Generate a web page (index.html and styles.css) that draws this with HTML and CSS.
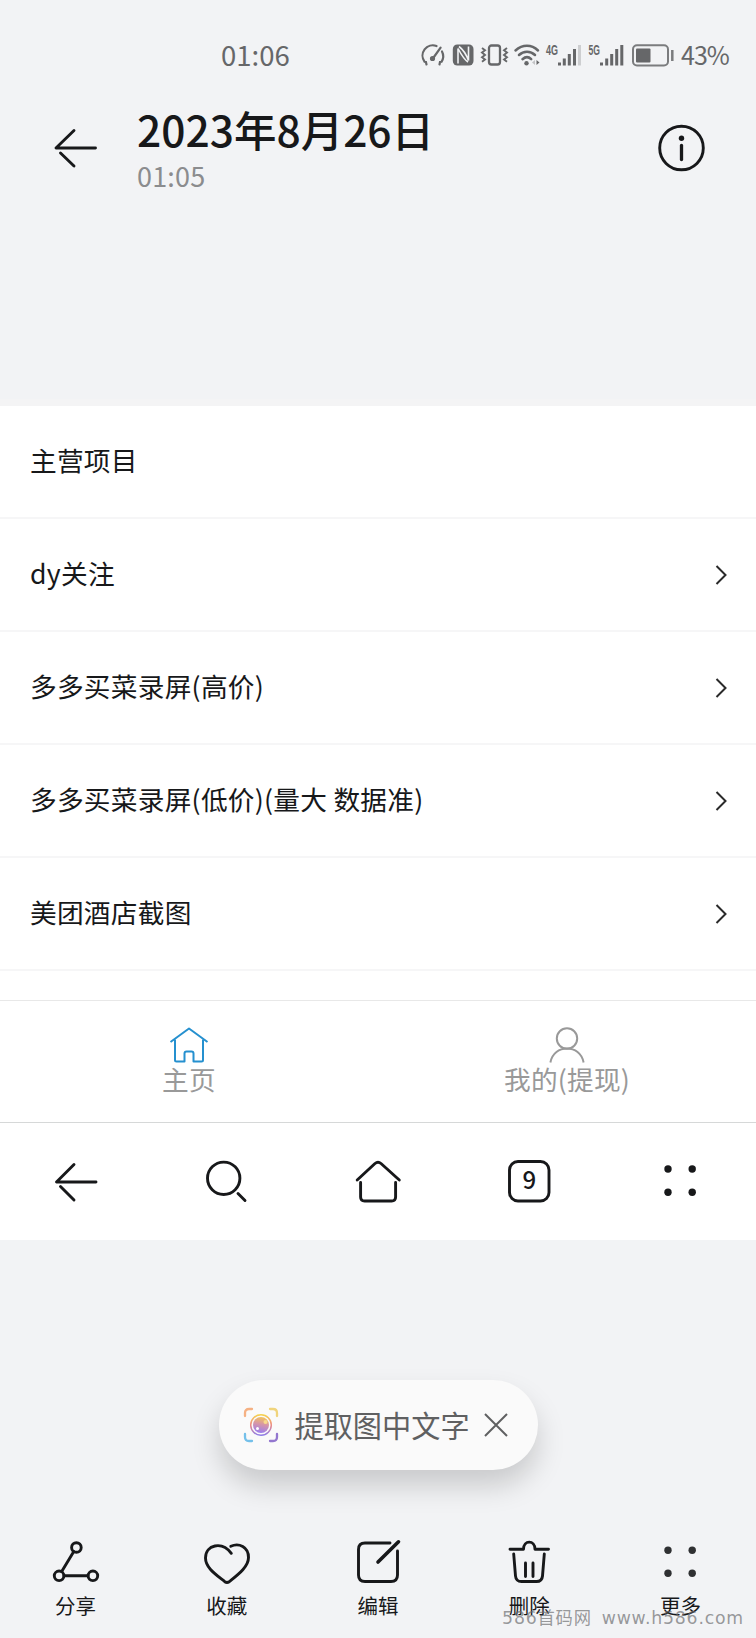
FILE: index.html
```
<!DOCTYPE html>
<html lang="zh-CN">
<head>
    <meta charset="UTF-8">
    <meta name="viewport" content="width=device-width, initial-scale=1.0">
    <title>2023年8月26日</title>
    <link rel="stylesheet" href="styles.css">
</head>
<body>
    <div class="status-bar">
        <span class="clock">01:06</span>
        <div class="status-icons">
            <svg width="24" height="24" viewBox="0 0 24 24" fill="none" stroke="#666769" stroke-width="2.2" stroke-linecap="round">
                <path d="M5.500 21.500l-.6-2.500-1.300-.2A10.300 10.300 0 0 1 15.500 3"/>
                <path d="M21 8.500A10.300 10.300 0 0 1 20.500 18.800l-1.500.2-.5 2.500"/>
                <path d="M19.600 4.600L11.500 16"/>
                <circle cx="11.500" cy="15.500" r="1.500" fill="#666769"/>
            </svg>
            <svg width="22" height="24" viewBox="0 0 22 24">
                <rect x="0.800" y="1.500" width="20.700" height="21" rx="4.500" fill="#666769"/>
                <path d="M6 20.500V5.500Q11.500 16 16 19M7 3.500Q13 8 16.500 17.500V3.500" fill="none" stroke="#f2f3f5" stroke-width="1.600"/>
            </svg>
            <svg width="27" height="24" viewBox="0 0 27 24" fill="none" stroke="#666769">
                <rect x="8" y="2.500" width="11" height="19" rx="2.500" stroke-width="2.300"/>
                <path d="M1 5l3 2.300-3 2.300 3 2.300-3 2.300 3 2.300-3 2.300M26 5l-3 2.300 3 2.300-3 2.300 3 2.300-3 2.300 3 2.300" stroke-width="1.900"/>
            </svg>
            <svg width="25" height="24" viewBox="0 0 25 24" fill="none" stroke="#666769" stroke-width="2.500" stroke-linecap="round">
                <path d="M.5 7.500C7.500 1.200 16.500 1.200 23 7.500M4 12C8.500 7.500 15.500 7.500 20 12M7.500 16.200C10.500 13.500 13.500 13.500 16.200 16.200"/>
                <circle cx="11.500" cy="20.300" r="2.200" fill="#666769" stroke="none"/>
                <path d="M21.500 17v5l3-2.500z" fill="#666769" stroke="none"/>
                <path d="M20 17v5l-3-2.500z" fill="#c3c4c6" stroke="none"/>
            </svg>
            <svg width="34" height="24" viewBox="0 0 34 24">
                <text class="net" x="-1" y="11.500" textLength="12" lengthAdjust="spacingAndGlyphs">4G</text>
                <path d="M12.500 22.500v-3M17.300 22.500v-7M22.300 22.500v-11.500M27.500 22.500V6" class="bars"/>
                <path d="M32.500 22.500V2" class="bars off"/>
            </svg>
            <svg width="36" height="24" viewBox="0 0 36 24">
                <text class="net" x="0.500" y="11.500" textLength="11.500" lengthAdjust="spacingAndGlyphs">5G</text>
                <path d="M13.500 22.500v-3M18.700 22.500v-7M23.700 22.500v-11.500M28.700 22.500V6M33.800 22.500V2" class="bars"/>
            </svg>
            <svg width="43" height="24" viewBox="0 0 43 24">
                <rect x="2" y="2.200" width="35" height="20.300" rx="4" fill="none" stroke="#7b7c7e" stroke-width="2"/>
                <rect x="5" y="5.500" width="14.500" height="14" rx="1" fill="#666769"/>
                <path d="M41.300 7v11" stroke="#7b7c7e" stroke-width="2.500"/>
            </svg>
            <span class="percent">43%</span>
        </div>
    </div>

    <div class="header">
        <svg class="back" width="44" height="44" viewBox="0 0 44 44" fill="none" stroke="#17181a" stroke-width="2.900" stroke-linecap="round" stroke-linejoin="round">
            <path d="M41.500 22H2L20 4.500M6.500 27L20 40"/>
        </svg>
        <div class="heading">
            <h1>2023年8月26日</h1>
            <p>01:05</p>
        </div>
        <svg class="info" width="48" height="48" viewBox="0 0 48 48" fill="none" stroke="#17181a" stroke-width="2.900">
            <circle cx="24.500" cy="24" r="21.800"/>
            <circle cx="24.500" cy="14.300" r="2.700" fill="#17181a" stroke="none"/>
            <path d="M24.500 21.500v14" stroke-width="3.300" stroke-linecap="round"/>
        </svg>
    </div>

    <div class="photo">
        <ul class="list">
            <li><span>主营项目</span></li>
            <li><span>dy关注</span> <svg class="arrow" viewBox="0 0 12 22"><path d="M1.500 2l9 9-9 9"/></svg></li>
            <li><span>多多买菜录屏(高价)</span> <svg class="arrow" viewBox="0 0 12 22"><path d="M1.500 2l9 9-9 9"/></svg></li>
            <li><span>多多买菜录屏(低价)(量大 数据准)</span> <svg class="arrow" viewBox="0 0 12 22"><path d="M1.500 2l9 9-9 9"/></svg></li>
            <li><span>美团酒店截图</span> <svg class="arrow" viewBox="0 0 12 22"><path d="M1.500 2l9 9-9 9"/></svg></li>
        </ul>

        <div class="tabs">
            <div class="tab">
                <svg width="40" height="38" viewBox="0 0 40 38" fill="none" stroke="#2590cf" stroke-width="2" stroke-linejoin="round">
                    <path d="M1.500 17L20 3.500l18.500 13.500"/>
                    <path d="M6 14.500V35q0 1.500 1.500 1.500h8v-8q0-2 2-2h5q2 0 2 2v8h8q1.500 0 1.500-1.500V14.500"/>
                </svg>
                <span>主页</span>
            </div>
            <div class="tab">
                <svg width="40" height="38" viewBox="0 0 40 38" fill="none" stroke="#999" stroke-width="2">
                    <circle cx="20" cy="13.500" r="10.200"/>
                    <path d="M3.400 37.500C6.500 18.700 33.500 18.700 36.600 37.500"/>
                </svg>
                <span>我的(提现)</span>
            </div>
        </div>

        <div class="browser-nav">
            <svg width="48" height="48" viewBox="0 0 48 48">
                <path d="M44 24H4.500L22 6.500M8.500 28.500L22 42"/>
            </svg>
            <svg width="48" height="48" viewBox="0 0 48 48">
                <circle cx="20.700" cy="20.300" r="16.200"/>
                <path d="M35 35.500l7 7"/>
            </svg>
            <svg width="48" height="48" viewBox="0 0 48 48">
                <path d="M3.200 22L21 5.500Q24 3 27 5.500L45.300 22M6.600 24.500V39q0 4 4 4h27q4 0 4-4V24.500"/>
            </svg>
            <svg width="48" height="48" viewBox="0 0 48 48">
                <rect x="4.500" y="3.500" width="39.500" height="39.500" rx="8.500"/>
                <text x="24.300" y="31" text-anchor="middle">9</text>
            </svg>
            <svg class="dots" width="48" height="48" viewBox="0 0 48 48">
                <circle cx="12" cy="11" r="3.700"/><circle cx="36.200" cy="11" r="3.700"/>
                <circle cx="12" cy="34.200" r="3.700"/><circle cx="36.200" cy="34.200" r="3.700"/>
            </svg>
        </div>
    </div>

    <div class="extract">
        <svg width="36" height="36" viewBox="0 0 36 36" fill="none" stroke-width="2.300" stroke-linecap="round">
            <defs>
                <linearGradient id="lens" x1="0.600" y1="0" x2="0.400" y2="1">
                    <stop offset="0" stop-color="#f3c45a"/>
                    <stop offset="0.450" stop-color="#d695a8"/>
                    <stop offset="1" stop-color="#9a7df0"/>
                </linearGradient>
                <linearGradient id="ring" x1="0.500" y1="0" x2="0.500" y2="1">
                    <stop offset="0" stop-color="#f5d34e"/>
                    <stop offset="0.500" stop-color="#ee8c86"/>
                    <stop offset="1" stop-color="#8b7be8"/>
                </linearGradient>
            </defs>
            <path d="M2 9V6q0-4 4-4h3" stroke="#f5b183"/>
            <path d="M27 2h3q4 0 4 4v3" stroke="#f0d47c"/>
            <path d="M2 27v3q0 4 4 4h3" stroke="#74c0ea"/>
            <path d="M27 34h3q4 0 4-4v-3" stroke="#9377cf"/>
            <circle cx="18" cy="18" r="10.300" stroke="url(#ring)" stroke-width="1.500"/>
            <circle cx="18" cy="18" r="8" fill="url(#lens)"/>
            <circle cx="22.500" cy="15" r="2" fill="#f8d98c"/>
            <circle cx="14.500" cy="21.500" r="1.500" fill="#fff"/>
        </svg>
        <span>提取图中文字</span>
        <svg class="close" width="24" height="24" viewBox="0 0 24 24"><path d="M1 1l22 22M23 1L1 23"/></svg>
    </div>

    <div class="actions">
        <div class="action">
            <svg width="48" height="48" viewBox="0 0 48 48">
                <circle cx="24.400" cy="9.500" r="4.800"/>
                <circle cx="7.100" cy="37.800" r="4.800"/>
                <circle cx="40.900" cy="37.800" r="4.800"/>
                <path d="M21.800 13.600L9.700 33.600M12 37.800h24"/>
            </svg>
            <span>分享</span>
        </div>
        <div class="action">
            <svg width="48" height="48" viewBox="0 0 48 48">
                <path d="M28.300 15.300C19 3 2.500 6.500 2.500 20c0 10 11 17 19.300 23.700q2.200 1.500 4.400 0C34.500 37 45.500 29 45.500 19.500 45.500 9 36 4.500 27.800 8.300"/>
            </svg>
            <span>收藏</span>
        </div>
        <div class="action">
            <svg width="48" height="48" viewBox="0 0 48 48">
                <path d="M36 5H11q-6.500 0-6.500 6.500v25.500q0 6.500 6.500 6.500h26q6.500 0 6.500-6.500V13"/>
                <path d="M44.500 3.800L24 24" stroke-width="3.600"/>
            </svg>
            <span>编辑</span>
        </div>
        <div class="action">
            <svg width="48" height="48" viewBox="0 0 48 48">
                <path d="M5 11.200h13.500c0-9.500 11.500-9.500 11.500 0h13.500"/>
                <path d="M8.700 16l1.800 22q.5 5.500 6 5.500h15q5.500 0 6-5.500l1.800-22M20.500 25v13.500M28 25v13.500"/>
            </svg>
            <span>删除</span>
        </div>
        <div class="action">
            <svg class="dots" width="48" height="48" viewBox="0 0 48 48">
                <circle cx="12" cy="12.300" r="3.700"/><circle cx="36.200" cy="12.300" r="3.700"/>
                <circle cx="12" cy="35.300" r="3.700"/><circle cx="36.200" cy="35.300" r="3.700"/>
            </svg>
            <span>更多</span>
        </div>
    </div>
    <div class="watermark"><span>586首码网</span><span>www.h586.com</span></div>
</body>
</html>
```
FILE: styles.css
```
* {
    box-sizing: border-box;
}
body {
    position: relative;
    width: 756px;
    height: 1638px;
    margin: 0;
    overflow: hidden;
    background-color: #f2f3f5;
    color: #17181a;
    font-family: "Noto Sans CJK SC", sans-serif;
}
svg {
    display: block;
    flex: none;
    overflow: visible;
}
.status-bar {
    display: flex;
    align-items: center;
    justify-content: space-between;
    height: 68px;
    margin-top: 21px;
    padding: 0 28px 0 221px;
    color: #666769;
}
.clock {
    padding-bottom: 2px;
    font-size: 27.5px;
    font-weight: 400;
    line-height: 40px;
}
.status-icons {
    display: flex;
    align-items: center;
    gap: 7px;
}
.net {
    font-family: "Liberation Sans", sans-serif;
    font-size: 14px;
    font-weight: bold;
    fill: #666769;
}
.bars {
    fill: none;
    stroke: #666769;
    stroke-width: 3;
}
.off {
    stroke: #cdced0;
}
.percent {
    width: 47px;
    padding-bottom: 2px;
    font-size: 25px;
    line-height: 40px;
    letter-spacing: -1px;
    white-space: nowrap;
}
.header {
    display: flex;
    height: 310px;
    padding: 0 51px 0 54px;
}
.back {
    margin-top: 37px;
}
.heading {
    flex: 1;
    margin-left: 39px;
}
.heading h1 {
    margin: 9px 0 0;
    font-size: 42.5px;
    font-weight: 500;
    line-height: 62px;
}
.heading p {
    margin: 0;
    color: #8b8c8e;
    font-size: 27px;
    line-height: 32px;
    letter-spacing: 0.2px;
}
.info {
    margin-top: 35px;
}
.photo {
    border-top: 7px solid #f4f4f5;
    background-color: #fff;
}
.list {
    margin: 0;
    padding: 0;
    list-style: none;
}
.list li {
    display: flex;
    align-items: center;
    justify-content: space-between;
    height: 113px;
    padding: 0 29px 0 30px;
    border-bottom: 2px solid #f6f6f7;
    font-size: 26.7px;
    letter-spacing: 0.25px;
}
.list span {
    padding-bottom: 5px;
}
.arrow {
    width: 12px;
    height: 22px;
    fill: none;
    stroke: #2a2a2a;
    stroke-width: 2;
}
.tabs {
    display: flex;
    height: 122px;
    margin-top: 29px;
    border-top: 1px solid #e8e8e8;
}
.tab {
    flex: 1;
    display: flex;
    flex-direction: column;
    align-items: center;
    padding-top: 24px;
    color: #999;
    font-size: 26.7px;
    line-height: 32px;
    letter-spacing: 0.2px;
}
.browser-nav {
    display: grid;
    grid-template-columns: repeat(5, 1fr);
    place-items: center;
    height: 118px;
    border-top: 1px solid #d6d8d8;
}
.browser-nav svg, .action svg {
    fill: none;
    stroke: #17181a;
    stroke-width: 2.9;
    stroke-linecap: round;
    stroke-linejoin: round;
}
.browser-nav text {
    fill: #17181a;
    stroke: none;
    font-size: 24px;
    font-weight: 500;
}
.browser-nav .dots, .action .dots {
    fill: #17181a;
    stroke: none;
}
.action .dots {
    fill: #2f3032;
}
.extract {
    display: flex;
    align-items: center;
    width: 319px;
    height: 90px;
    margin: 140px auto 0;
    padding: 0 30px 0 24px;
    border-radius: 45px;
    background-color: #fafafa;
    box-shadow: 0 16px 28px rgba(0, 0, 0, 0.17);
    color: #5f6061;
    font-size: 29.2px;
    line-height: 40px;
}
.extract span {
    margin-left: 16px;
    padding-bottom: 3px;
    white-space: nowrap;
}
.close {
    margin-left: auto;
    fill: none;
    stroke: #5f6061;
    stroke-width: 2;
}
.actions {
    display: grid;
    grid-template-columns: repeat(5, 1fr);
    margin-top: 68px;
}
.action {
    display: flex;
    flex-direction: column;
    align-items: center;
    gap: 5px;
    font-size: 20.5px;
    line-height: 28px;
}
.watermark {
    position: absolute;
    right: 12px;
    bottom: 10px;
    display: flex;
    gap: 10px;
    color: rgba(110, 111, 114, 0.7);
    font-family: "DejaVu Sans", "Noto Sans CJK SC", sans-serif;
    font-size: 17.3px;
    line-height: 20px;
    letter-spacing: 0.8px;
}
```
